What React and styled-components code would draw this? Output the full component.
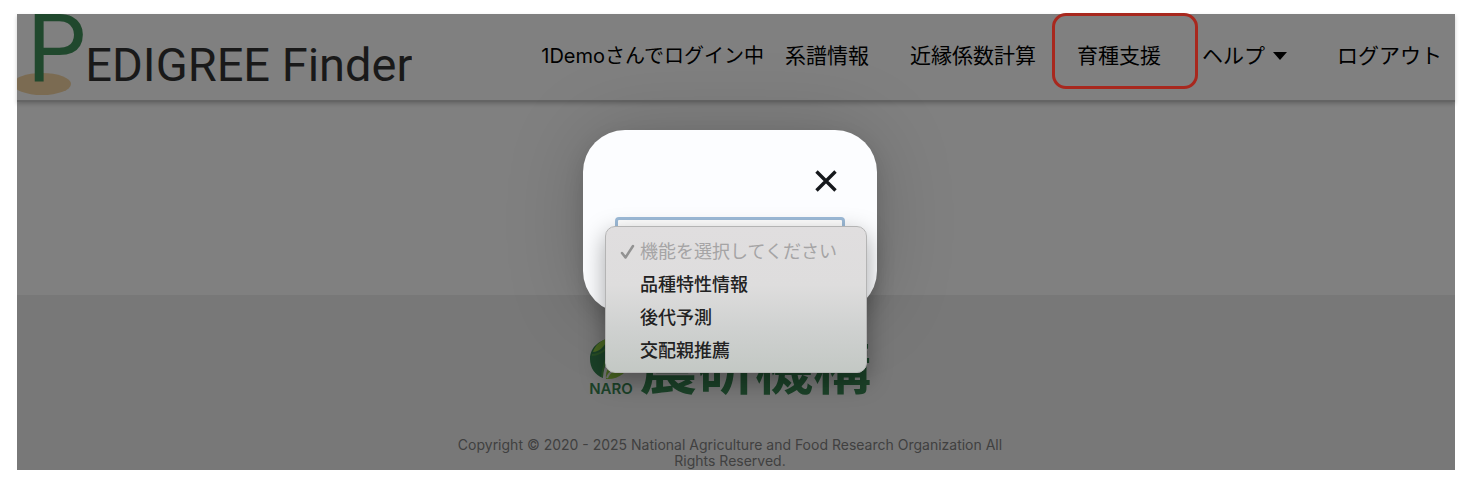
import React from "react";
import styled, { createGlobalStyle } from "styled-components";

const Global = createGlobalStyle`
  * { box-sizing: border-box; }
  body { margin: 0; background: #fff; font-family: Inter, "Noto Sans CJK JP", sans-serif; }
`;

const Page = styled.div`
  padding: 14px 19px 18px 17px;
`;
const Screen = styled.div`
  position: relative;
  background: #808080;
`;
const Header = styled.header`
  display: flex;
  justify-content: space-between;
  height: 88px;
  border-bottom: 2px solid #646464;
  box-shadow: 0 2px 4px rgba(0, 0, 0, 0.2);
`;
const Brand = styled.a`
  position: relative;
  display: flex;
  align-items: baseline;
  height: 86px;
  padding-left: 10px;
  overflow: hidden;
  font-family: Roboto, sans-serif;
  color: #191919;
  text-decoration: none;
  white-space: nowrap;
`;
const Ground = styled.svg`
  position: absolute;
  left: 0;
  bottom: 4px;
  width: 56px;
  height: 24px;
`;
const Initial = styled.span`
  position: relative;
  font-size: 94px;
  line-height: 70px;
  color: #20482d;
`;
const BrandName = styled.span`
  margin-left: -1px;
  font-size: 47px;
  line-height: 70px;
`;
const Nav = styled.nav`
  display: flex;
  align-items: center;
  height: 84px;
  padding-right: 13px;
  font-size: 21px;
  line-height: 30px;
  white-space: nowrap;
  color: #000;
`;
const User = styled.span`
  margin-right: 21px;
  font-size: 20px;
`;
const NavLink = styled.a`
  color: inherit;
  text-decoration: none;
  margin-left: ${(p) => p.$gap || 0}px;
`;
const Framed = styled.div`
  display: flex;
  align-items: center;
  align-self: flex-start;
  height: 76px;
  margin: -1px 0 0 16px;
  padding: 10px 34px 0 22px;
  border: 3px solid #a8281e;
  border-radius: 14px;
`;
const HelpButton = styled.button`
  display: flex;
  align-items: center;
  gap: 8px;
  margin-left: 4px;
  padding: 0;
  border: 0;
  background: none;
  font: inherit;
  color: inherit;
`;
const Caret = styled.span`
  border: 7px solid transparent;
  border-top: 8px solid #000;
  border-bottom: 0;
`;
const Main = styled.main`
  height: 193px;
`;
const Footer = styled.footer`
  display: flex;
  flex-direction: column;
  align-items: center;
  padding: 40px 12px 1px 0;
  background: #787878;
`;
const FooterLogo = styled.div`
  display: flex;
  align-items: flex-start;
  gap: 6px;
  height: 62px;
`;
const Mark = styled.div`
  display: flex;
  flex-direction: column;
  align-items: center;
  padding-top: 2px;
  font-size: 15px;
  line-height: 18px;
  font-weight: 600;
  color: #1c4229;
`;
const OrgName = styled.span`
  font: 700 58px/58px "Noto Sans CJK JP", sans-serif;
  color: #1c4229;
`;
const Copyright = styled.p`
  width: 580px;
  margin: 40px 0 0;
  font-size: 14px;
  line-height: 16px;
  text-align: center;
  color: #404040;
`;
const Overlay = styled.div`
  position: absolute;
  inset: 0;
  display: flex;
  justify-content: center;
  align-items: flex-start;
  padding: 116px 12px 0 0;
`;
const Dialog = styled.div`
  display: flex;
  flex-direction: column;
  width: 294px;
  height: 183px;
  padding: 36px 32px 0;
  border-radius: 42px;
  background: #fcfdff;
  box-shadow: 0 0 80px rgba(0, 0, 0, 0.18), 0 8px 20px rgba(0, 0, 0, 0.12);
`;
const Close = styled.button`
  align-self: flex-end;
  display: flex;
  padding: 4px;
  margin-right: 4px;
  border: 0;
  background: none;
`;
const Field = styled.div`
  position: relative;
  margin-top: 21px;
`;
const Select = styled.select`
  display: block;
  width: 100%;
  height: 42px;
  padding: 0 12px;
  border: 3px solid #9dbbd8;
  border-radius: 4px;
  background: #fff;
  font: inherit;
  font-size: 18px;
  color: #777;
`;
const Menu = styled.ul`
  position: absolute;
  top: 9px;
  left: -10px;
  width: 262px;
  margin: 0;
  padding: 8px 0 5px;
  list-style: none;
  border: 1px solid #b4b4b4;
  border-radius: 10px;
  background: linear-gradient(#e0dedf 0%, #dedddd 40%, #cfd1d0 70%, #c3c8c4 100%);
  box-shadow: 0 8px 24px rgba(0, 0, 0, 0.35);
`;
const Option = styled.li`
  display: flex;
  align-items: center;
  height: 33px;
  padding-left: 14px;
  font-size: 18px;
  line-height: 24px;
  font-weight: ${(p) => (p.$muted ? 400 : 500)};
  white-space: nowrap;
  color: ${(p) => (p.$muted ? "#a5a4a5" : "#222")};
`;
const Tick = styled.span`
  display: flex;
  width: 20px;
`;

const options = ["品種特性情報", "後代予測", "交配親推薦"];

export default function App() {
  return (
    <Page>
      <Global />
      <Screen>
        <Header>
          <Brand href="#" aria-label="PEDIGREE Finder">
            <Ground viewBox="0 0 56 24" aria-hidden="true">
              <ellipse cx="25" cy="12" rx="29" ry="11" fill="#7b6b52" />
            </Ground>
            <Initial>P</Initial>
            <BrandName>EDIGREE Finder</BrandName>
          </Brand>
          <Nav>
            <User>1Demoさんでログイン中</User>
            <NavLink href="#">系譜情報</NavLink>
            <NavLink href="#" $gap={41}>近縁係数計算</NavLink>
            <Framed>
              <NavLink href="#">育種支援</NavLink>
            </Framed>
            <HelpButton type="button">ヘルプ<Caret /></HelpButton>
            <NavLink href="#" $gap={50}>ログアウト</NavLink>
          </Nav>
        </Header>
        <Main />
        <Footer>
          <FooterLogo>
            <Mark>
              <svg width="44" height="43" viewBox="0 0 44 43" aria-hidden="true">
                <path d="M24 1C11 2 1 10 1 22C1 31 6 38 14 41C13 32 17 25 27 17C31 12 29 5 24 1Z" fill="#1c4229" />
                <path d="M20 1C12 3 6 8 4 15C10 15 15 10 20 1Z" fill="#4b6823" />
                <path d="M3 18C10 18 19 12 23 5C22 14 14 24 13 40" fill="none" stroke="#294f26" strokeWidth="2" />
                <path d="M17 42C16 34 20 27 30 21C38 17 41 20 41 24C40 35 29 43 17 42Z" fill="#4b6823" />
                <path d="M18 41C20 35 25 31 37 30" fill="none" stroke="#787878" strokeWidth="2" />
              </svg>
              NARO
            </Mark>
            <OrgName>農研機構</OrgName>
          </FooterLogo>
          <Copyright>
            Copyright © 2020 - 2025 National Agriculture and Food Research Organization All Rights Reserved.
          </Copyright>
        </Footer>
        <Overlay>
          <Dialog role="dialog" aria-label="育種支援">
            <Close type="button" aria-label="閉じる">
              <svg width="22" height="22" viewBox="0 0 22 22" stroke="#15181c" strokeWidth="3.4">
                <path d="M1.5 1.5L20.5 20.5M20.5 1.5L1.5 20.5" />
              </svg>
            </Close>
            <Field>
              <Select aria-label="機能" defaultValue="">
                <option value="">機能を選択してください</option>
                {options.map((o) => <option key={o}>{o}</option>)}
              </Select>
              <Menu role="listbox" aria-label="機能">
                <Option role="option" aria-selected="true" $muted>
                  <Tick>
                    <svg width="15" height="16" viewBox="0 0 15 16" fill="none" stroke="#929292" strokeWidth="2.5" strokeLinecap="round" strokeLinejoin="round">
                      <path d="M2 9L5.5 13.5L13 2" />
                    </svg>
                  </Tick>
                  機能を選択してください
                </Option>
                {options.map((o) => (
                  <Option key={o} role="option" aria-selected="false"><Tick />{o}</Option>
                ))}
              </Menu>
            </Field>
          </Dialog>
        </Overlay>
      </Screen>
    </Page>
  );
}
